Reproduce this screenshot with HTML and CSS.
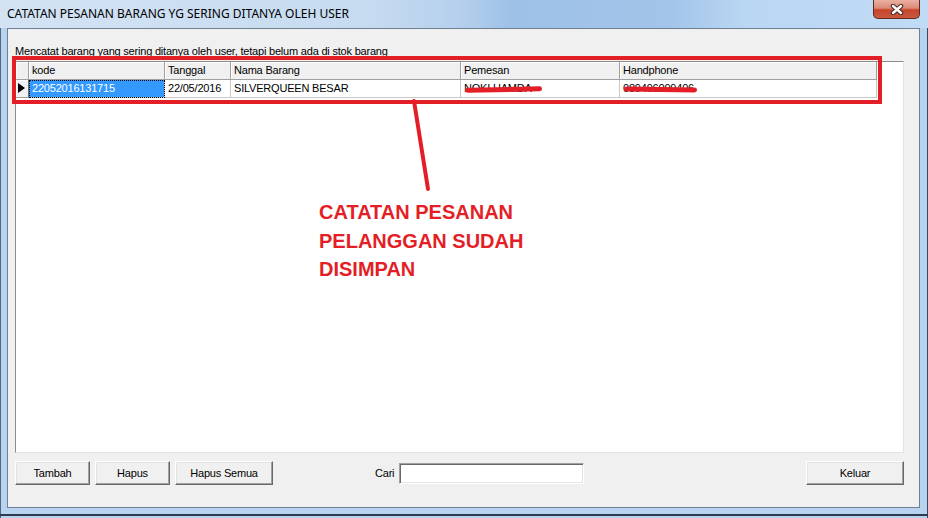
FILE: index.html
```html
<!DOCTYPE html>
<html lang="id">
<head>
    <meta charset="UTF-8">
    <title>Catatan Pesanan Barang</title>
    <link rel="stylesheet" href="styles.css">
</head>
<body>

<div class="window">
    <div class="titlebar">
        <span class="title">CATATAN PESANAN BARANG YG SERING DITANYA OLEH USER</span>
        <button class="close-btn" aria-label="Tutup">
            <svg width="14" height="11" viewBox="0 0 14 11">
                <path d="M3 2 L11 9 M11 2 L3 9" stroke="#4a2a24" stroke-width="4.5" stroke-linecap="round"/>
                <path d="M3 2 L11 9 M11 2 L3 9" stroke="#fff" stroke-width="2.4" stroke-linecap="round"/>
            </svg>
        </button>
    </div>

    <div class="frame">
        <div class="client">
            <div class="caption">Mencatat barang yang sering ditanya oleh user, tetapi belum ada di stok barang</div>

            <div class="grid">
                <div class="grid-row grid-head">
                    <div class="cell ind"></div>
                    <div class="cell c-kode">kode</div>
                    <div class="cell c-tgl">Tanggal</div>
                    <div class="cell c-nama">Nama Barang</div>
                    <div class="cell c-pemesan">Pemesan</div>
                    <div class="cell c-hp">Handphone</div>
                </div>
                <div class="grid-row grid-data">
                    <div class="cell ind"><span class="arrow-ind"></span></div>
                    <div class="cell c-kode selected">22052016131715</div>
                    <div class="cell c-tgl">22/05/2016</div>
                    <div class="cell c-nama">SILVERQUEEN BESAR</div>
                    <div class="cell c-pemesan"><span class="hidden-text">NOKI HAMDA</span></div>
                    <div class="cell c-hp"><span class="hidden-text hp">089496099406</span></div>
                </div>
            </div>

            <div class="actions">
                <button class="btn w-75">Tambah</button>
                <button class="btn w-75">Hapus</button>
                <button class="btn w-98">Hapus Semua</button>
                <div class="search">
                    <label class="search-label">Cari</label>
                    <input class="search-input" type="text">
                </div>
                <button class="btn w-98 push-right">Keluar</button>
            </div>

            <!-- coretan merah di atas screenshot -->
            <div class="mark-box"></div>
            <svg class="mark-line" width="911" height="478">
                <line x1="406" y1="72" x2="420" y2="160" stroke="#e41e26" stroke-width="4" stroke-linecap="round"/>
            </svg>
            <div class="mark-note">CATATAN PESANAN<br>PELANGGAN SUDAH<br>DISIMPAN</div>
        </div>
    </div>
</div>

</body>
</html>
```

FILE: styles.css
```css
body {
    margin: 0;
    padding: 0;
    background: #fff;
    font-family: "Liberation Sans", Arial, sans-serif;
}

.window {
    width: 928px;
    height: 518px;
    display: flex;
    flex-direction: column;
    background: #b7d3f0;
    box-shadow: inset 1px 0 #55677c, inset -1px 0 #3a4a5c;
}

.titlebar {
    height: 28px;
    flex: none;
    display: flex;
    align-items: flex-start;
    justify-content: space-between;
    background: linear-gradient(90deg, #d3e3f4 0%, #c6dbf0 40%, #b4cfec 50%, #9ec1e7 55%, #a2c4e9 72%, #b9d6f3 80%, #c0dbf5 100%);
}

.title {
    padding-left: 7px;
    line-height: 28px;
    font-family: "Noto Sans", sans-serif;
    font-size: 12px;
    color: #000;
}

.close-btn {
    width: 47px;
    height: 19px;
    margin-right: 8px;
    padding: 0;
    border: 1px solid #5e2a22;
    border-top: none;
    border-radius: 0 0 5px 5px;
    background: linear-gradient(180deg, #e9b0a2 0%, #dc8a76 45%, #c7432c 55%, #c95a3e 100%);
    display: flex;
    align-items: center;
    justify-content: center;
}

.frame {
    flex: none;
    padding: 0 8px 6px 7px;
    border-bottom: 2px solid #2c3c4e;
}

.client {
    position: relative;
    box-sizing: border-box;
    height: 480px;
    border: 1px solid #6f8093;
    background: #f0f0f0;
    padding: 16px 15px 22px 7px;
    display: flex;
    flex-direction: column;
    font-size: 11px;
    letter-spacing: -0.2px;
}

.caption {
    height: 13px;
    line-height: 13px;
    margin-bottom: 3px;
    color: #000;
}

.grid {
    height: 392px;
    flex: none;
    box-sizing: border-box;
    border: 1px solid;
    border-color: #8c8c8c #e3e3e3 #e3e3e3 #8c8c8c;
    background: #fff;
}

.grid-row {
    display: flex;
    height: 18px;
}

.cell {
    box-sizing: border-box;
    height: 18px;
    line-height: 17px;
    padding-left: 3px;
    white-space: nowrap;
    overflow: hidden;
    border-right: 1px solid #a0a0a0;
    border-bottom: 1px solid #a0a0a0;
}

.grid-head .cell {
    background: #f0f0f0;
    box-shadow: inset 1px 1px #fff;
}

.grid-data .cell {
    border-color: #c8c8c8;
}

.grid-data .cell.ind {
    background: #f0f0f0;
    border-right-color: #696969;
    border-bottom-color: #a0a0a0;
    box-shadow: inset 1px 1px #fff;
}

.ind { width: 13px; padding-left: 0; }
.c-kode { width: 136px; }
.c-tgl { width: 66px; }
.c-nama { width: 230px; }
.c-pemesan { width: 159px; }
.c-hp { width: 257px; }

.arrow-ind {
    display: block;
    width: 0;
    height: 0;
    margin: 3px 0 0 2px;
    border-top: 5px solid transparent;
    border-bottom: 5px solid transparent;
    border-left: 7px solid #000;
}

.selected {
    background: #3399ff;
    color: #fff;
    outline: 1px dotted #000;
    outline-offset: -1px;
}

.hidden-text {
    position: relative;
    display: inline-block;
}

.hidden-text::after {
    content: "";
    position: absolute;
    left: 1px;
    right: -10px;
    top: 7px;
    height: 5px;
    border-radius: 3px;
    background: #e41e26;
    transform: rotate(-1deg);
}

.hidden-text.hp::after {
    right: -3px;
    transform: rotate(0.8deg);
}

.actions {
    display: flex;
    align-items: center;
    gap: 5px;
    margin-top: 8px;
    height: 24px;
    flex: none;
}

.btn {
    box-sizing: border-box;
    height: 24px;
    padding: 0;
    font-family: "Liberation Sans", Arial, sans-serif;
    font-size: 11px;
    letter-spacing: -0.2px;
    color: #000;
    background: #f0f0f0;
    border: 1px solid;
    border-color: #fff #696969 #696969 #fff;
    box-shadow: inset -1px -1px #a0a0a0, inset 1px 1px #e3e3e3;
}

.w-75 { width: 75px; }
.w-98 { width: 98px; }

.search {
    display: flex;
    align-items: center;
    margin-left: 97px;
}

.search-label {
    width: 24px;
}

.search-input {
    box-sizing: border-box;
    width: 185px;
    height: 21px;
    margin: 0;
    border: 1px solid;
    border-color: #a0a0a0 #fff #fff #a0a0a0;
    box-shadow: inset 1px 1px #696969, inset -1px -1px #e3e3e3;
    background: #fff;
}

.push-right {
    margin-left: auto;
}

.mark-box {
    position: absolute;
    left: 4px;
    top: 27px;
    width: 870px;
    height: 48px;
    box-sizing: border-box;
    border: 4px solid #e41e26;
}

.mark-line {
    position: absolute;
    left: 0;
    top: 0;
    pointer-events: none;
}

.mark-note {
    position: absolute;
    left: 311px;
    top: 169px;
    font-size: 20px;
    font-weight: bold;
    letter-spacing: 0;
    line-height: 28.5px;
    color: #e41e26;
}
```
